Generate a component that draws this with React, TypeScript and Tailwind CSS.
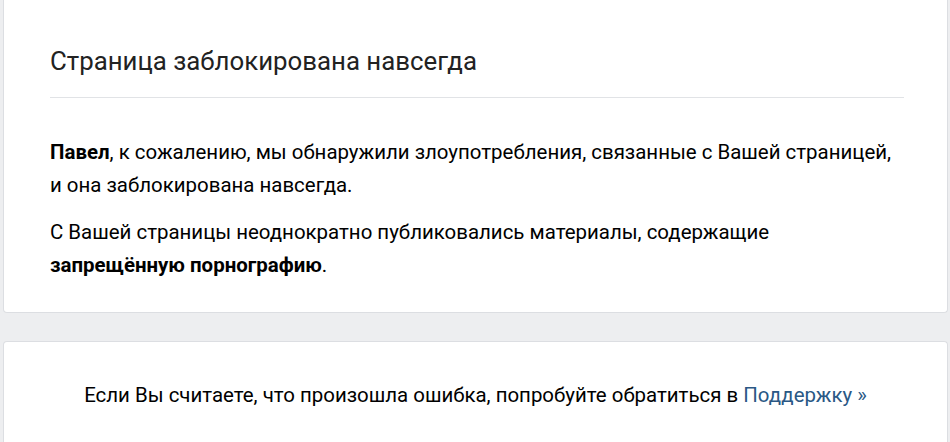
export default function App() {
  return (
    <div className="min-h-[442px] bg-[#edeef0] pl-[3px] pr-[2px] font-['Roboto',sans-serif] text-[#000]">
      <div className="rounded-b-[4px] border border-t-0 border-[#dcdee2] bg-white pb-[30px] pl-[46px] pr-[43px] pt-[45px]">
        <h1 className="border-b border-[#e1e3e6] pb-[20px] text-[25.8px] leading-[32px] text-[#222]">Страница заблокирована навсегда</h1>
        <div className="pt-[38px] text-[20.45px] leading-[33px]">
          <p>
            <b className="font-bold">Павел</b>, к сожалению, мы обнаружили злоупотребления, связанные с Вашей страницей,
            <br />и она заблокирована навсегда.
          </p>
          <p className="mt-[14px]">
            С Вашей страницы неоднократно публиковались материалы, содержащие
            <br />
            <b className="font-bold">запрещённую порнографию</b>.
          </p>
        </div>
      </div>
      <div className="mt-[28px] rounded-t-[4px] border border-b-0 border-[#dcdee2] bg-white pb-[31px] pt-[37px] text-center text-[20.45px] leading-[33px]">
        Если Вы считаете, что произошла ошибка, попробуйте обратиться в <a className="text-[#2a5885]">Поддержку »</a>
      </div>
    </div>
  );
}
